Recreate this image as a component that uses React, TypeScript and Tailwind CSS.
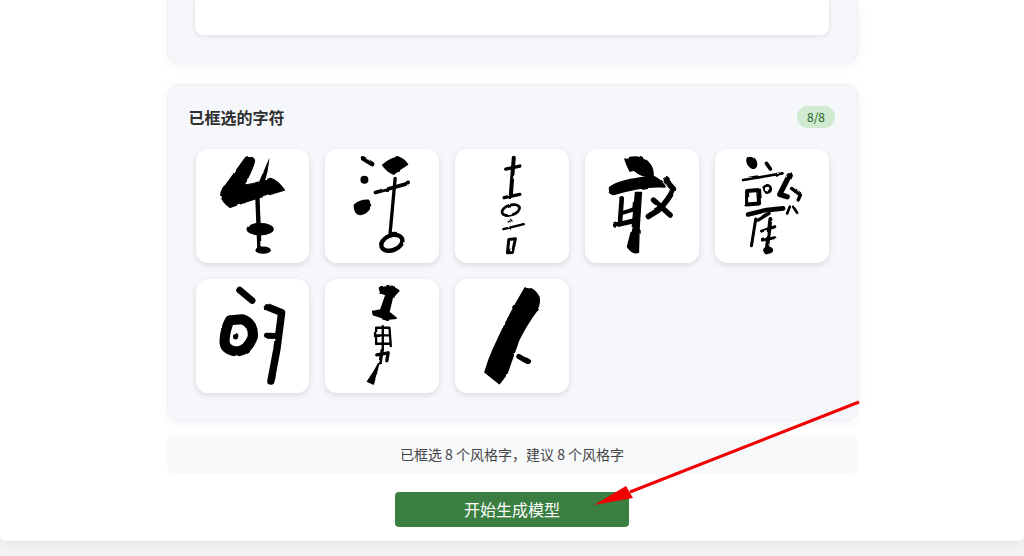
const Ink = ({ box, id, children }: { box: string; id: string; children: React.ReactNode }) => (
  <div className="h-[113.5px] rounded-xl bg-white shadow-[0_2px_6px_rgba(0,0,0,0.12)] overflow-hidden">
    <svg viewBox={box} className="block h-full w-full">
      <defs>
        <filter id={id} x="-10%" y="-10%" width="120%" height="120%">
          <feTurbulence type="fractalNoise" baseFrequency="0.025" numOctaves="2" seed="7" />
          <feDisplacementMap in="SourceGraphic" scale="7" xChannelSelector="R" yChannelSelector="G" />
          <feGaussianBlur stdDeviation="1.1" />
        </filter>
      </defs>
      <g filter={`url(#${id})`} fill="#000" stroke="#000" strokeLinecap="round" strokeLinejoin="round">
        {children}
      </g>
    </svg>
  </div>
);

const cells = [
  <Ink box="18 12 337 340" id="i1" key="1">
    <path strokeWidth="4" d="M165 37Q182 30 191 45Q192 60 160 120Q200 115 240 100Q262 108 281 135Q200 158 118 187Q95 172 90 150Q92 132 105 120Z" />
    <path stroke="none" d="M236 38Q232 80 220 110L205 110Q220 75 236 38Z" />
    <path fill="none" strokeWidth="13" d="M200 160Q203 240 206 315" />
    <ellipse stroke="none" cx="208" cy="252" rx="41" ry="19" />
    <ellipse stroke="none" cx="217" cy="315" rx="23" ry="11" />
  </Ink>,
  <Ink box="405 12 341 340" id="i2" key="2">
    <path fill="none" strokeWidth="14" d="M518 40L546 57" />
    <path strokeWidth="5" d="M578 60Q595 45 622 35Q642 42 652 58Q630 72 610 87Q590 78 578 60Z" />
    <circle stroke="none" cx="523" cy="104" r="12" />
    <path strokeWidth="5" d="M493 180Q510 165 535 166L544 180Q530 207 510 208Q493 207 493 180Z" />
    <path fill="none" strokeWidth="11" d="M556 142L654 115" />
    <path fill="none" strokeWidth="10" d="M615 100L600 265" />
    <ellipse fill="none" strokeWidth="13" cx="605" cy="293" rx="33" ry="22" transform="rotate(-22 605 293)" />
  </Ink>,
  <Ink box="15 12 341 340" id="i3" key="3">
    <path fill="none" strokeWidth="12" d="M191 38L182 152" />
    <path fill="none" strokeWidth="10" d="M167 72L209 63" />
    <path fill="none" strokeWidth="10" d="M162 158L209 148" />
    <ellipse fill="none" strokeWidth="8" cx="182" cy="195" rx="27" ry="15" transform="rotate(-18 182 195)" />
    <path fill="none" strokeWidth="4" d="M174 226L180 230M181 223L186 228" />
    <path fill="none" strokeWidth="7" d="M160 252L221 237" />
    <path fill="none" strokeWidth="9" d="M176 283L196 281L187 322L172 323Z" />
  </Ink>,
  <Ink box="405 12 341 340" id="i4" key="4">
    <path strokeWidth="5" d="M525 43Q560 28 590 48Q612 68 608 95Q575 96 552 75L540 78Q530 60 525 43Z" />
    <path strokeWidth="6" d="M476 130Q510 102 610 95Q632 105 644 125Q580 120 490 148Q475 144 476 130Z" />
    <path strokeWidth="4" d="M556 142L574 142L567 250L565 322Q548 328 532 305L546 250Z" />
    <path fill="none" strokeWidth="14" d="M515 160L510 228" />
    <path fill="none" strokeWidth="15" d="M496 240L556 226" />
    <path fill="none" strokeWidth="12" d="M512 205L555 192" />
    <path fill="none" strokeWidth="17" d="M646 105L670 132Q655 165 625 195L595 214" />
    <path fill="none" strokeWidth="16" d="M610 165L660 210" />
  </Ink>,
  <Ink box="797 12 339 340" id="i5" key="5">
    <ellipse stroke="none" cx="906" cy="52" rx="15" ry="21" transform="rotate(-30 906 52)" />
    <path fill="none" strokeWidth="11" d="M950 55L962 72" />
    <path fill="none" strokeWidth="8" d="M880 105L998 85" />
    <circle fill="none" strokeWidth="8" cx="952" cy="132" r="11" />
    <path fill="none" strokeWidth="12" d="M892 138L925 135L928 175L892 178Z" />
    <path fill="none" strokeWidth="16" d="M1018 92L990 148L1012 155" />
    <path fill="none" strokeWidth="10" d="M1025 130L1052 150L1045 165" />
    <path fill="none" strokeWidth="8" d="M1020 185L1012 205M1030 185L1042 203" />
    <path fill="none" strokeWidth="14" d="M895 208L950 195L1000 190" />
    <path fill="none" strokeWidth="9" d="M918 222L905 302" />
    <path fill="none" strokeWidth="12" d="M962 222L950 322" />
    <path fill="none" strokeWidth="9" d="M935 258L975 245M938 285L975 278" />
    <ellipse stroke="none" cx="955" cy="315" rx="15" ry="11" />
    <path fill="none" strokeWidth="10" d="M958 205L925 225" />
  </Ink>,
  <Ink box="18 12 337 338" id="i6" key="6">
    <path fill="none" strokeWidth="20" d="M147 45L184 76" />
    <path fill="none" strokeWidth="30" d="M118 135L155 132Q190 145 186 185Q170 228 135 228Q100 222 102 195Q104 160 118 135Z" />
    <circle stroke="none" cx="135" cy="184" r="8" />
    <path fill="none" strokeWidth="22" d="M230 95L272 112L258 220L240 316" />
    <path fill="none" strokeWidth="18" d="M228 181L264 182" />
  </Ink>,
  <Ink box="405 12 341 338" id="i7" key="7">
    <path strokeWidth="5" d="M568 38L605 33L626 46L606 68L596 110L618 128L590 131L550 118L548 108L572 104L588 58L572 52Z" />
    <path fill="none" strokeWidth="7" d="M558 157L598 157L602 212M558 157L558 206M578 152L578 224M558 180L600 180M558 205L600 205" />
    <path fill="none" strokeWidth="10" d="M560 238L594 232L590 256M576 225L570 262" />
    <path strokeWidth="4" d="M568 258L550 326L532 318L552 288Z" />
  </Ink>,
  <Ink box="795 12 341 338" id="i8" key="8">
    <path strokeWidth="5" d="M1005 38Q1030 35 1046 65Q1050 85 1038 108Q1010 145 985 195L950 295L928 324L885 290Q895 255 910 222Q950 130 1005 38Z" />
    <path fill="none" strokeWidth="15" d="M986 243L1012 258" />
  </Ink>,
];

export default function App() {
  return (
    <div className="relative h-[556px] overflow-hidden bg-[#f4f4f4] font-['Noto_Sans_CJK_SC','Liberation_Sans',sans-serif]">
      <div className="flex h-[541px] flex-col items-center rounded-b-md bg-white shadow-[0_2px_12px_rgba(0,0,0,0.08)]">
        <div className="h-[63px] w-[691px] shrink-0 rounded-b-xl border border-t-0 border-[#eef0f4] bg-[#f5f7fb] pr-[27.5px] pl-[27px] shadow-[0_2px_12px_rgba(0,0,0,0.05)]">
          <div className="h-[35px] rounded-b-lg bg-white shadow-[0_1px_5px_rgba(0,0,0,0.1)]" />
        </div>
        <div className="mt-[21px] h-[337px] w-[691px] shrink-0 rounded-xl border border-[#eef0f4] bg-[#f5f7fb] pt-[21px] pr-[21.5px] pl-[21px] shadow-[0_2px_12px_rgba(0,0,0,0.05)]">
          <div className="flex h-[22px] items-center justify-between">
            <h2 className="text-base leading-[22px] font-bold text-[#2f2f2f]">已框选的字符</h2>
            <span className="flex h-[22px] w-[38px] items-center justify-center rounded-full bg-[#d0ebd2] text-xs text-[#1b5e20]">8/8</span>
          </div>
          <div className="mt-[21px] grid grid-cols-5 gap-x-4 gap-y-[16.5px] pr-[6px] pl-[7px]">{cells}</div>
        </div>
        <div className="mt-[14px] flex h-[39px] w-[691px] shrink-0 items-center justify-center rounded-lg bg-[#f8f9fb] pb-[2px] text-sm text-[#444]">
          已框选 8 个风格字，建议 8 个风格字
        </div>
        <button className="mt-[18px] h-[35px] w-[234px] shrink-0 rounded bg-[#3a7e41] pb-[2px] text-base text-white">开始生成模型</button>
      </div>
      <svg className="pointer-events-none absolute inset-0 h-[556px] w-[1024px]" viewBox="0 0 1024 556">
        <path d="M859 402L630 492" stroke="#f00000" strokeWidth="3" fill="none" />
        <path d="M594 505L626 486L633 498Z" fill="#f00000" />
      </svg>
    </div>
  );
}
